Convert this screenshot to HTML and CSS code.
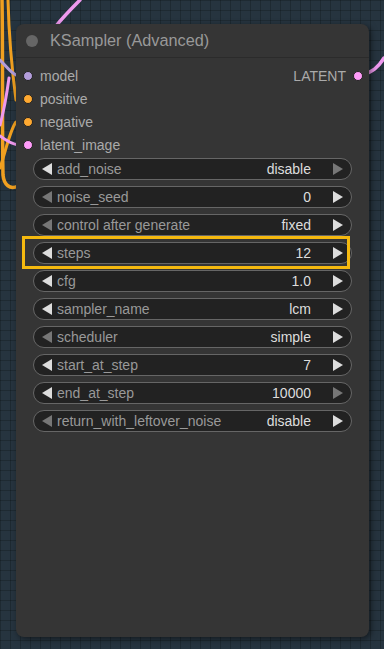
FILE: index.html
```html
<!DOCTYPE html>
<html>
<head>
    <title>KSampler (Advanced)</title>
    <link rel="stylesheet" href="styles.css">
</head>
<body>
    <div class="canvas">
        <!-- links behind the node -->
        <svg class="links" width="384" height="649" viewBox="0 0 384 649">
            <g fill="none" stroke-linecap="round">
                <path d="M2 0 C 3 60, 2 130, 3 175 C 4 185, 10 190, 18 186" stroke="#f0a020" stroke-width="3.5"/>
                <path d="M8 0 C 9 40, 12 70, 16 100" stroke="#f0a020" stroke-width="3"/>
                <path d="M0 168 C 6 150, 10 130, 16 122" stroke="#f0a020" stroke-width="3"/>
                <path d="M0 60 C 6 66, 10 72, 16 75" stroke="#b39ddb" stroke-width="3"/>
                <path d="M0 125 C 4 110, 6 100, 9 78" stroke="#ee99ee" stroke-width="3"/>
                <path d="M0 136 C 8 142, 12 144, 18 145" stroke="#ee99ee" stroke-width="3"/>
                <path d="M56 26 C 64 16, 72 8, 80 0" stroke="#ee99ee" stroke-width="3.5"/>
                <path d="M362 75 C 372 72, 378 68, 384 58" stroke="#ee99ee" stroke-width="3.5"/>
            </g>
        </svg>

        <div class="node">
            <div class="node-title">
                <span class="title-dot"></span>
                <span>KSampler (Advanced)</span>
            </div>

            <div class="slots">
                <div class="slot-row">
                    <div class="slot"><span class="dot dot-model"></span>model</div>
                    <div class="slot slot-out">LATENT<span class="dot dot-latent"></span></div>
                </div>
                <div class="slot-row">
                    <div class="slot"><span class="dot dot-cond"></span>positive</div>
                </div>
                <div class="slot-row">
                    <div class="slot"><span class="dot dot-cond"></span>negative</div>
                </div>
                <div class="slot-row">
                    <div class="slot"><span class="dot dot-latent"></span>latent_image</div>
                </div>
            </div>

            <div class="widgets">
                <div class="widget">
                    <span class="arrow arrow-left"></span>
                    <span class="w-label">add_noise</span>
                    <span class="w-value">disable</span>
                    <span class="arrow arrow-right off"></span>
                </div>
                <div class="widget">
                    <span class="arrow arrow-left off"></span>
                    <span class="w-label">noise_seed</span>
                    <span class="w-value">0</span>
                    <span class="arrow arrow-right"></span>
                </div>
                <div class="widget">
                    <span class="arrow arrow-left off"></span>
                    <span class="w-label">control after generate</span>
                    <span class="w-value">fixed</span>
                    <span class="arrow arrow-right"></span>
                </div>
                <div class="widget">
                    <span class="arrow arrow-left"></span>
                    <span class="w-label">steps</span>
                    <span class="w-value">12</span>
                    <span class="arrow arrow-right"></span>
                </div>
                <div class="widget">
                    <span class="arrow arrow-left"></span>
                    <span class="w-label">cfg</span>
                    <span class="w-value">1.0</span>
                    <span class="arrow arrow-right"></span>
                </div>
                <div class="widget">
                    <span class="arrow arrow-left"></span>
                    <span class="w-label">sampler_name</span>
                    <span class="w-value">lcm</span>
                    <span class="arrow arrow-right"></span>
                </div>
                <div class="widget">
                    <span class="arrow arrow-left off"></span>
                    <span class="w-label">scheduler</span>
                    <span class="w-value">simple</span>
                    <span class="arrow arrow-right"></span>
                </div>
                <div class="widget">
                    <span class="arrow arrow-left"></span>
                    <span class="w-label">start_at_step</span>
                    <span class="w-value">7</span>
                    <span class="arrow arrow-right"></span>
                </div>
                <div class="widget">
                    <span class="arrow arrow-left"></span>
                    <span class="w-label">end_at_step</span>
                    <span class="w-value">10000</span>
                    <span class="arrow arrow-right off"></span>
                </div>
                <div class="widget">
                    <span class="arrow arrow-left off"></span>
                    <span class="w-label">return_with_leftover_noise</span>
                    <span class="w-value">disable</span>
                    <span class="arrow arrow-right"></span>
                </div>
            </div>

            <!-- highlight around the steps widget -->
            <div class="highlight"></div>
        </div>
    </div>
</body>
</html>
```

FILE: styles.css
```css
html, body {
    margin: 0;
    padding: 0;
}
body {
    font-family: "Liberation Sans", Arial, sans-serif;
    width: 384px;
    height: 649px;
    overflow: hidden;
}
.canvas {
    position: relative;
    width: 384px;
    height: 649px;
    background-color: #26343f;
    background-image:
        linear-gradient(to right, rgba(0, 0, 0, 0.2) 1px, transparent 1px),
        linear-gradient(to bottom, rgba(0, 0, 0, 0.2) 1px, transparent 1px);
    background-size: 10px 10px;
    padding: 24px 0 0 16px;
    box-sizing: border-box;
}
.links {
    position: absolute;
    left: 0;
    top: 0;
}
.node {
    position: relative;
    width: 353px;
    height: 613px;
    background-color: #353535;
    border-radius: 8px;
    box-shadow: 2px 2px 6px rgba(0, 0, 0, 0.5);
    box-sizing: border-box;
}
.node-title {
    height: 34px;
    display: flex;
    align-items: center;
    gap: 12px;
    padding-left: 10px;
    font-size: 16.3px;
    color: #999;
    border-bottom: 1px solid #2b2b2b;
    box-sizing: border-box;
}
.title-dot {
    width: 12px;
    height: 12px;
    border-radius: 50%;
    background-color: #666;
}
.slots {
    padding-top: 6px;
}
.slot-row {
    height: 23px;
    display: flex;
    justify-content: space-between;
    align-items: center;
}
.slot {
    display: flex;
    align-items: center;
    gap: 7px;
    font-size: 14px;
    color: #aaa;
    padding-left: 7px;
}
.slot-out {
    padding-left: 0;
    padding-right: 6px;
}
.dot {
    width: 8px;
    height: 8px;
    border-radius: 50%;
    border: 1px solid #222;
}
.dot-model { background-color: #b39ddb; }
.dot-cond { background-color: #ffa931; }
.dot-latent { background-color: #ff9cf9; }
.widgets {
    display: flex;
    flex-direction: column;
    gap: 6px;
    padding: 2px 17px 0 17px;
}
.widget {
    height: 22px;
    display: flex;
    align-items: center;
    background-color: #222;
    border: 1px solid #666;
    border-radius: 12px;
    box-sizing: border-box;
    font-size: 14px;
    padding: 0 8px 0 8px;
}
.w-label {
    color: #999;
    margin-left: 5px;
    flex: 1;
    white-space: nowrap;
}
.w-value {
    color: #ddd;
    margin-right: 22px;
}
.arrow {
    width: 0;
    height: 0;
    border-top: 6px solid transparent;
    border-bottom: 6px solid transparent;
}
.arrow-left {
    border-right: 10px solid #ddd;
}
.arrow-right {
    border-left: 10px solid #ddd;
}
.arrow-left.off {
    border-right-color: #777;
}
.arrow-right.off {
    border-left-color: #777;
}
.highlight {
    position: absolute;
    left: 6px;
    top: 212px;
    width: 328px;
    height: 33px;
    border: 3px solid #f5b90f;
    box-sizing: border-box;
}
```
